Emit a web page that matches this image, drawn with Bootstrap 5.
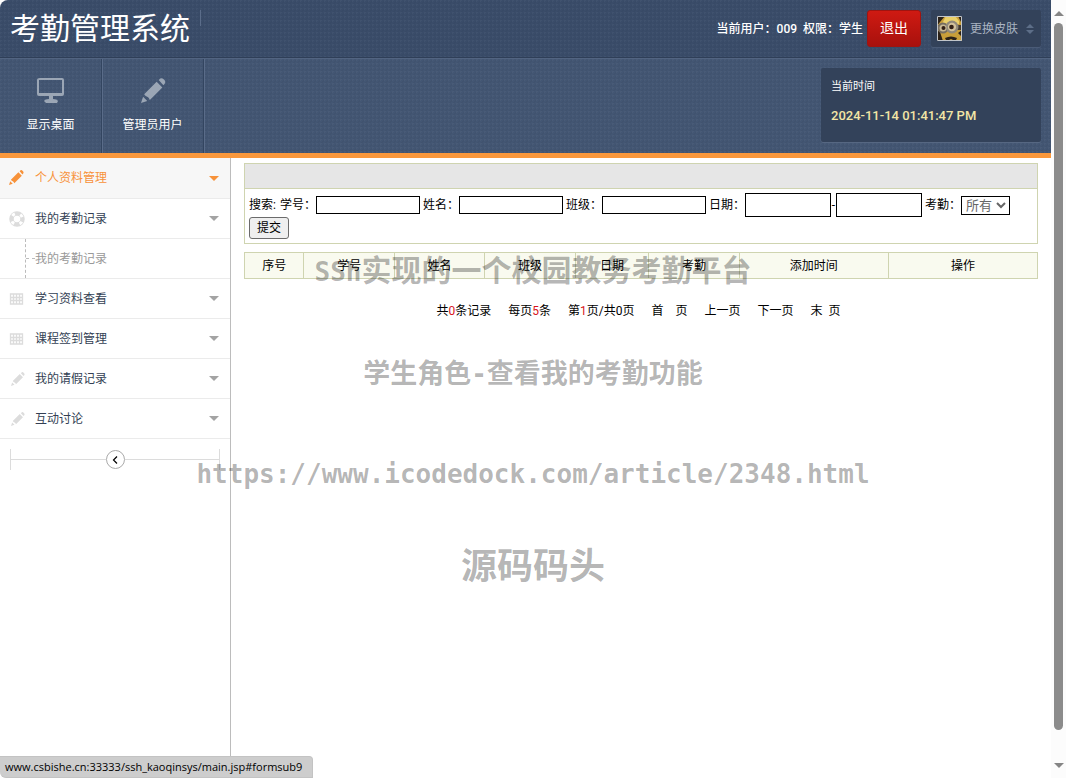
<!DOCTYPE html>
<html lang="zh-CN">
<head>
<meta charset="utf-8">
<meta name="viewport" content="width=device-width, initial-scale=1">
<title>考勤管理系统</title>
<link href="https://cdn.jsdelivr.net/npm/bootstrap@5.3.0/dist/css/bootstrap.min.css" rel="stylesheet">
<style>
  body { font: 12px/20px "Roboto", "Noto Sans CJK SC", sans-serif; color: #000; background: #fff; }
  a { color: inherit; text-decoration: none; }
  .app-shell { min-height: 100vh; }
  .weave { background-image: linear-gradient(135deg, rgba(255,255,255,.03) 25%, transparent 25% 50%, rgba(0,0,0,.03) 50% 75%, transparent 75%); background-size: 4px 4px; color: #fff; }
  .top-bar { background-color: #3a4c69; height: 58px; border-bottom: 1px solid #2f3f58; border-top-left-radius: 8px; padding: 10px; }
  .brand-title { font-size: 30px; line-height: 38px; font-weight: 400; padding-right: 10px; }
  .brand-tick { width: 1px; height: 16px; background: #5b6d8a; }
  .user-info { font-weight: 500; line-height: 38px; white-space: pre; }
  .btn-exit { width: 54px; height: 37px; padding: 0; border: 1px solid #a01410; border-radius: 3px; font-size: 14px; color: #fff; background: linear-gradient(#cf1a12, #a8110d); }
  .btn-exit:hover { color: #fff; background: #b8150f; }
  .skin-btn { width: 110px; height: 37px; margin-left: 10px; border: 0; border-radius: 2px; padding: 0 6px; color: #a9b3c1; background: #33425a; box-shadow: 0 1px 0 #4a5b77; }
  .nav-bar { background-color: #435673; border-top: 1px solid #526481; height: 95px; }
  .nav-tile { width: 102px; border-right: 1px solid #334560; box-shadow: 1px 0 0 #5a6c89; padding-top: 16px; color: #fff; }
  .nav-tile svg { margin-bottom: 10px; }
  .time-box { width: 220px; height: 74px; margin: 9px 10px; padding: 9px 10px; background: #33425a; border-radius: 2px; box-shadow: 0 1px 0 #566782; }
  .time-label { font-size: 11px; }
  .time-value { font-size: 13px; font-weight: 500; color: #f2e6a6; margin-top: 9px; }
  .accent-rule { height: 5px; background: #fa983c; }
  .side-menu { width: 231px; border-right: 1px solid #bcbcbc; }
  .side-item { height: 40px; padding: 0 11px 0 9px; border-bottom: 1px solid #ebebeb; color: #333f54; }
  .side-item svg:first-child { width: 16px; margin-right: 10px; color: #dcdcdc; }
  .side-item.current, .side-item.current svg:first-child { color: #f7923a; }
  .side-item.current { height: 41px; background: #f7f7f7; }
  .drop-mark { border: 5px solid transparent; border-top-color: #a3a3a3; border-bottom: 0; margin-left: auto; }
  .current .drop-mark { border-top-color: #f7923a; }
  .side-sub { height: 39px; margin-left: 25px; border-left: 1px dashed #bbb; color: #999; }
  .side-sub::before { content: ""; width: 9px; border-top: 1px dashed #bbb; }
  .sub-wrap { border-bottom: 1px solid #ebebeb; }
  .collapser { margin: 10px 10px 0; height: 21px; border: solid #dcdcdc; border-width: 0 1px; }
  .collapser hr { margin: 0; color: #dcdcdc; opacity: 1; }
  .collapse-btn { width: 19px; height: 19px; flex: none; border: 1px solid #aaa; border-radius: 50%; padding: 0; background: #fff; color: #000; }
  .page-main { padding: 5px 13px; }
  .search-panel { border: 1px solid #cfd4b0; margin-bottom: 8px; }
  .search-head { height: 25px; background: #e6e6e6; border-bottom: 1px solid #cfd4b0; }
  .search-form { padding: 4px; column-gap: 3px; }
  .search-lead { padding-right: 1px; }
  .box-field { border: 1px solid #000; border-radius: 0; padding: 0 2px; width: 104px; height: 18px; background: #fff; }
  .box-date { width: 86px; height: 24px; }
  .date-dash { width: 5px; text-align: center; }
  .box-select { width: 49px; height: 19px; border: 1px solid #000; padding: 0; font-size: 13px; line-height: 17px; color: #666; background: #fff; }
  .btn-go { height: 22px; width: 40px; padding: 0; border: 1px solid #6b6b6b; border-radius: 3px; background: #efefef; color: #000; }
  .records { width: 100%; table-layout: fixed; }
  .records th { height: 26px; font-weight: 400; text-align: center; border: 1px solid #cfd4b0; background: #f9faef; }
  .pager { gap: 17px; margin-top: 22px; padding-right: 5px; }
  .num { color: #d8131b; }
  .scroll-strip { width: 15px; background: #fcfcfc; padding: 11px 0 10px; }
  .scroll-thumb { width: 9px; margin: 7px 0 33px; border-radius: 5px; background: #8b8b8b; }
  .tri-up { border: 5px solid transparent; border-bottom-color: #858585; border-top: 0; }
  .tri-down { border: 5px solid transparent; border-top-color: #858585; border-bottom: 0; }
  .stamp-layer { position: absolute; inset: 0; padding-top: 248px; gap: 60px; pointer-events: none; color: rgba(0,0,0,.3); font-family: "Noto Sans CJK SC", sans-serif; font-weight: 700; line-height: 40px; white-space: nowrap; }
  .stamp-30 { font-size: 30px; } .stamp-27 { font-size: 27px; } .stamp-36 { font-size: 36px; line-height: 30px; margin-top: -6px; }
  .stamp-latin { font-family: "DejaVu Sans Mono", monospace; font-size: 26px; }
  .status-tip { position: absolute; left: 0; bottom: 0; padding: 0 10px 0 5px; border: 1px solid #c3c3c3; border-left: 0; border-radius: 0 4px 0 6px; background: #cdcdcd; font-family: "Open Sans", sans-serif; font-size: 11px; }
</style>
</head>
<body class="position-relative">
<svg class="d-none" aria-hidden="true">
  <symbol id="pencil" viewBox="0 0 24 24"><path fill="currentColor" d="M0 24l2-6 4 4zM3 15.500L15 3.500l5.500 5.500L8.500 21q-1-2.500-2.500-3t-3-2.500zM17 2l1.500-1.500q1.500-1 3.500 1t1 3.500L21.500 7z"/></symbol>
  <symbol id="grid" viewBox="0 0 16 16"><path fill="none" stroke="currentColor" stroke-width="1.300" d="M1.500 3h12v10h-12zM4.500 3v10M7.500 3v10M10.500 3v10M1 6.500h13M1 9.500h13"/></symbol>
</svg>
<div class="app-shell d-flex">
  <div class="d-flex flex-column flex-grow-1">
    <header>
      <div class="top-bar weave d-flex align-items-start">
        <h1 class="brand-title m-0">考勤管理系统</h1><span class="brand-tick"></span>
        <span class="user-info ms-auto me-1">当前用户：009  权限：学生</span>
        <button class="btn btn-exit" type="button">退出</button>
        <button class="skin-btn d-flex align-items-center" type="button">
          <svg width="25" height="25" viewBox="0 0 25 25" aria-hidden="true"><path fill="#c99f3a" d="M0 0h25v25H0z"/><path fill="#ead06a" d="M9 0h9l4 5v3H5z"/><path fill="#2c2218" d="M0 0h8L3 6l-3 4zM21 0h4v8zM0 14l3 2 3 9H0zM21 17l4-3v7zM8 22q6-3 12 0l-1 2h-3l-2-1-2 1H9z"/><path fill="#453c30" d="M0 9h25v5H0z"/><circle cx="6" cy="12" r="5.500" fill="#756d60"/><circle cx="15" cy="11" r="6.500" fill="#91897a"/><circle cx="6" cy="12" r="3.500" fill="#c9b994"/><circle cx="15" cy="11" r="4.200" fill="#d3c29b"/><circle cx="6.500" cy="12" r="2" fill="#322117"/><circle cx="14.500" cy="11" r="2.300" fill="#322117"/><path fill="none" stroke="#c1c5ca" d="M.5.5h24v24H.5z"/></svg>
          <span class="ms-2">更换皮肤</span>
          <svg class="ms-2" width="8" height="10" viewBox="0 0 8 10" aria-hidden="true"><path fill="#5d6e88" d="M0 4l4-4 4 4zM0 6h8l-4 4z"/></svg>
        </button>
      </div>
      <div class="nav-bar weave d-flex">
        <a href="#desktop" class="nav-tile d-flex flex-column align-items-center">
          <svg width="28" height="30" viewBox="0 0 28 30" aria-hidden="true"><path fill="#9ba6b5" fill-rule="evenodd" d="M3 3h22q2 0 2 2v14q0 2-2 2H16v3q4 0 5 2l-1 2H9l-2-2q1-2 5-2v-3H2q-2 0-2-2V5q0-2 3-2zm-1 2v13h23V5z"/></svg>显示桌面</a>
        <a href="#admin" class="nav-tile d-flex flex-column align-items-center">
          <svg width="26" height="30" viewBox="0 0 26 30" color="#9ba6b5" aria-hidden="true"><use href="#pencil" x="1" y="3" width="25" height="25"/></svg>管理员用户</a>
        <div class="time-box ms-auto"><div class="time-label">当前时间</div><div class="time-value">2024-11-14 01:41:47 PM</div></div>
      </div>
      <div class="accent-rule"></div>
    </header>
    <div class="d-flex flex-grow-1">
      <nav class="side-menu flex-shrink-0">
        <a href="#profile" class="side-item current d-flex align-items-center"><svg height="16"><use href="#pencil" width="15" height="15"/></svg>个人资料管理<span class="drop-mark"></span></a>
        <a href="#attendance" class="side-item d-flex align-items-center"><svg height="16" viewBox="0 0 16 16"><circle cx="8" cy="8" r="5.500" fill="none" stroke="currentColor" stroke-width="4.500"/><circle cx="8" cy="8" r="5.500" fill="none" stroke="#fff" stroke-width="3" stroke-dasharray="3 5.640" stroke-dashoffset="-2.800"/></svg>我的考勤记录<span class="drop-mark"></span></a>
        <div class="sub-wrap"><a href="#formsub9" class="side-sub d-flex align-items-center">我的考勤记录</a></div>
        <a href="#material" class="side-item d-flex align-items-center"><svg height="16"><use href="#grid" width="16" height="16"/></svg>学习资料查看<span class="drop-mark"></span></a>
        <a href="#checkin" class="side-item d-flex align-items-center"><svg height="16"><use href="#grid" width="16" height="16"/></svg>课程签到管理<span class="drop-mark"></span></a>
        <a href="#leave" class="side-item d-flex align-items-center"><svg height="16"><use href="#pencil" x="2" y="1" width="14" height="14"/></svg>我的请假记录<span class="drop-mark"></span></a>
        <a href="#discuss" class="side-item d-flex align-items-center"><svg height="16"><use href="#pencil" x="2" y="1" width="14" height="14"/></svg>互动讨论<span class="drop-mark"></span></a>
        <div class="collapser d-flex align-items-center"><hr class="flex-grow-1"><button type="button" class="collapse-btn d-flex align-items-center justify-content-center" aria-label="收起"><svg width="6" height="8" viewBox="0 0 6 8"><path d="M5 .5L1.500 4 5 7.500" fill="none" stroke="currentColor" stroke-width="1.200"/></svg></button><hr class="flex-grow-1"></div>
      </nav>
      <main class="page-main flex-grow-1">
        <section class="search-panel">
          <div class="search-head"></div>
          <form class="search-form d-flex flex-wrap align-items-center">
            <span class="search-lead">搜索:</span>
            <span class="d-flex align-items-center"><label for="sno">学号：</label><input id="sno" class="box-field" type="text"></span>
            <span class="d-flex align-items-center"><label for="sname">姓名：</label><input id="sname" class="box-field" type="text"></span>
            <span class="d-flex align-items-center"><label for="sclass">班级：</label><input id="sclass" class="box-field" type="text"></span>
            <span class="d-flex align-items-center"><label for="from">日期：</label><input id="from" class="box-field box-date" type="text"><span class="date-dash">-</span><input class="box-field box-date" type="text" aria-label="结束日期"></span>
            <span class="d-flex align-items-center"><label for="kind">考勤：</label><select id="kind" class="box-select"><option>所有</option></select></span>
            <button class="btn-go" type="submit">提交</button>
          </form>
        </section>
        <table class="records">
          <colgroup><col style="width:7.5%"><col style="width:11.4%"><col style="width:11.4%"><col style="width:11.4%"><col style="width:9.3%"><col style="width:11.4%"><col style="width:18.8%"><col style="width:18.8%"></colgroup>
          <thead><tr><th>序号</th><th>学号</th><th>姓名</th><th>班级</th><th>日期</th><th>考勤</th><th>添加时间</th><th>操作</th></tr></thead>
        </table>
        <div class="pager d-flex justify-content-center">
          <span>共<span class="num">0</span>条记录</span><span>每页<span class="num">5</span>条</span><span>第<span class="num">1</span>页/共0页</span><a href="#first">首　页</a><a href="#prev">上一页</a><a href="#next">下一页</a><a href="#last">末&nbsp; 页</a>
        </div>
      </main>
    </div>
  </div>
  <div class="scroll-strip d-flex flex-column align-items-center flex-shrink-0" aria-hidden="true"><span class="tri-up"></span><span class="scroll-thumb flex-grow-1"></span><span class="tri-down"></span></div>
</div>
<div class="stamp-layer d-flex flex-column align-items-center">
  <div class="stamp-30"><span class="stamp-latin">SSh</span>实现的一个校园教务考勤平台</div>
  <div class="stamp-27">学生角色<span class="stamp-latin">-</span>查看我的考勤功能</div>
  <div class="stamp-latin">https://www.icodedock.com/article/2348.html</div>
  <div class="stamp-36">源码码头</div>
</div>
<div class="status-tip">www.csbishe.cn:33333/ssh_kaoqinsys/main.jsp#formsub9</div>
<script src="https://cdn.jsdelivr.net/npm/bootstrap@5.3.0/dist/js/bootstrap.bundle.min.js"></script>
</body>
</html>
